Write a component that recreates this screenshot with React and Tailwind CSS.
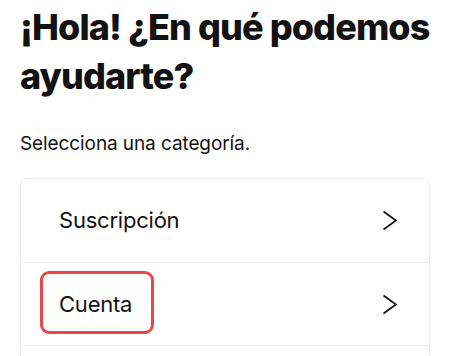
const ROWS = [
  { label: "Suscripción" },
  { label: "Cuenta", marked: true },
];

function Chevron() {
  return (
    <svg width="16" height="21" viewBox="0 0 16 21" fill="none" className="shrink-0">
      <path d="M1.5 1.5 L14 10.5 L1.5 19.5" stroke="#121212" strokeWidth="1.7" strokeLinejoin="miter" />
    </svg>
  );
}

export default function App() {
  return (
    <div className="h-screen bg-white text-[#121212] font-['Inter',sans-serif] overflow-hidden">
      <div className="px-5 pt-[3px]">
        <h1 className="text-[36px] leading-[49px] font-extrabold tracking-[-0.025em]">
          ¡Hola! ¿En qué podemos ayudarte?
        </h1>
        <p className="mt-[31px] text-[19px] leading-[24px] tracking-[-0.005em]">Selecciona una categoría.</p>
      </div>

      <ul className="mx-5 mt-[22px] border border-[#ececec] rounded-md">
        {ROWS.map((row, i) => (
          <li
            key={row.label}
            className={`h-[83px] flex items-center justify-between pl-[38px] pr-[31px] ${i > 0 ? "border-t border-[#ececec]" : ""}`}
          >
            <span className="relative text-[22px] tracking-[-0.01em]">
              {row.label}
              {row.marked && (
                <span className="absolute -left-[19px] -right-[22px] -top-[17px] -bottom-[13px] border-[3px] border-[#e5484d] rounded-[9px]" />
              )}
            </span>
            <Chevron />
          </li>
        ))}
        {/* next row, below the fold */}
        <li className="h-[84px] border-t border-[#ececec]" />
      </ul>
    </div>
  );
}
